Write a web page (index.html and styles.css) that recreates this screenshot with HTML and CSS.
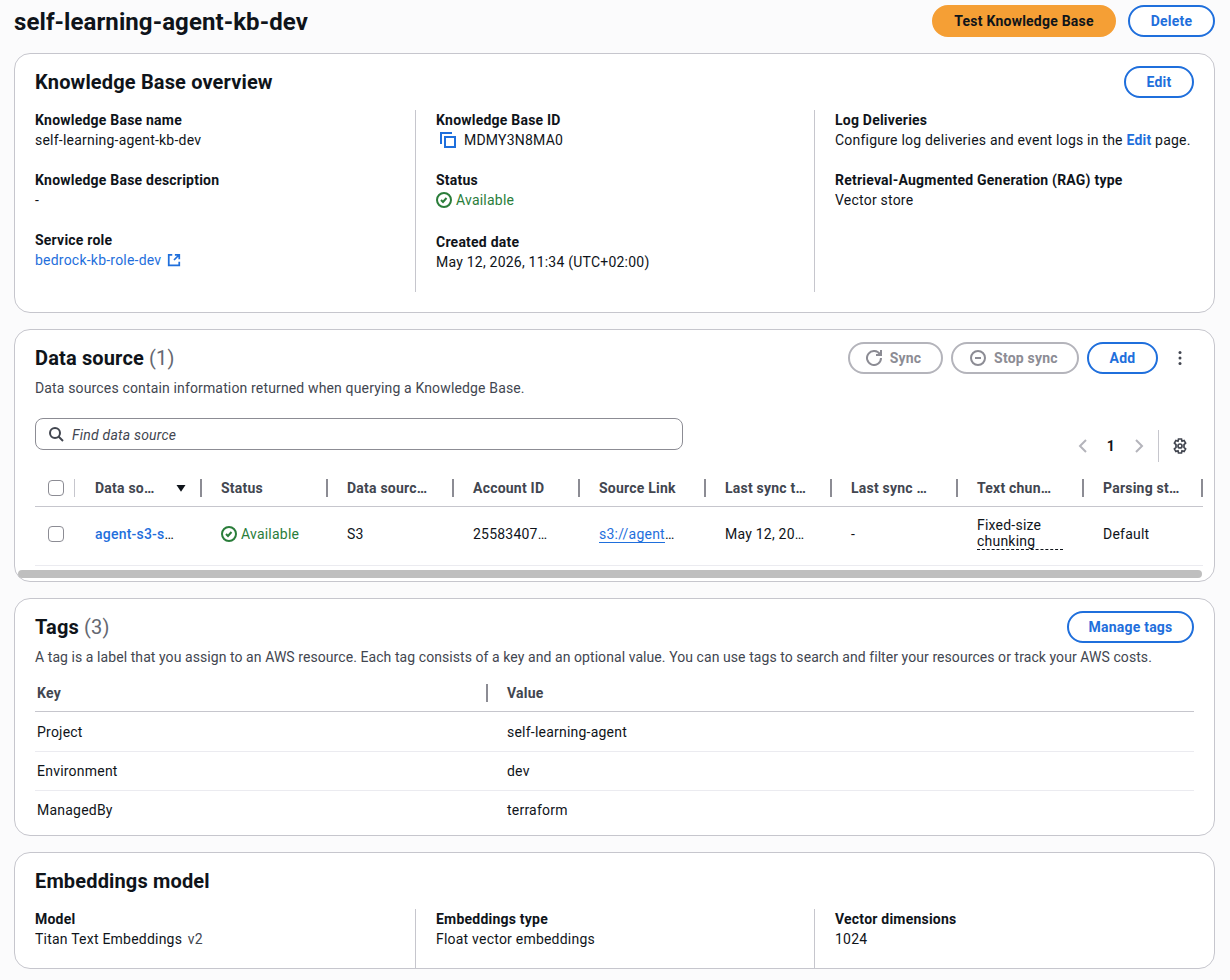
FILE: index.html
```html
<!DOCTYPE html>
<html lang="en">
<head>
    <meta charset="UTF-8">
    <title>self-learning-agent-kb-dev</title>
    <link rel="stylesheet" href="styles.css">
</head>
<body>
    <div class="page">
        <!-- page header -->
        <div class="page-header">
            <h1>self-learning-agent-kb-dev</h1>
            <div class="actions">
                <button class="btn btn-primary">Test Knowledge Base</button>
                <button class="btn btn-delete">Delete</button>
            </div>
        </div>

        <!-- overview -->
        <section class="card card-overview">
            <div class="card-header">
                <h2>Knowledge Base overview</h2>
                <button class="btn btn-edit">Edit</button>
            </div>
            <div class="columns">
                <div class="col">
                    <div class="field"><div class="label">Knowledge Base name</div><div>self-learning-agent-kb-dev</div></div>
                    <div class="field"><div class="label">Knowledge Base description</div><div>-</div></div>
                    <div class="field">
                        <div class="label">Service role</div>
                        <a class="link" href="#">bedrock-kb-role-dev<svg class="icon icon-ext" viewBox="0 0 16 16"><path d="M14 7V2H9M14 2 8 8M6 2H2v12h12v-4"/></svg></a>
                    </div>
                </div>
                <div class="col">
                    <div class="field">
                        <div class="label">Knowledge Base ID</div>
                        <div class="copy-row">
                            <svg class="icon icon-copy" viewBox="0 0 16 16"><path d="M1 12V1h11"/><path d="M5 5h10v10H5z"/></svg>
                            <span>MDMY3N8MA0</span>
                        </div>
                    </div>
                    <div class="field field-status">
                        <div class="label">Status</div>
                        <div class="status">
                            <svg class="icon" viewBox="0 0 16 16"><circle cx="8" cy="8" r="7"/><path d="m5 8 2 2 3.5-4"/></svg>
                            Available
                        </div>
                    </div>
                    <div class="field"><div class="label">Created date</div><div>May 12, 2026, 11:34 (UTC+02:00)</div></div>
                </div>
                <div class="col">
                    <div class="field">
                        <div class="label">Log Deliveries</div>
                        <div>Configure log deliveries and event logs in the <a class="link link-bold" href="#">Edit</a> page.</div>
                    </div>
                    <div class="field"><div class="label">Retrieval-Augmented Generation (RAG) type</div><div>Vector store</div></div>
                </div>
            </div>
        </section>

        <!-- data source -->
        <section class="card card-source">
            <div class="card-header">
                <h2>Data source <span class="count">(1)</span></h2>
                <div class="actions actions-tight">
                    <button class="btn btn-disabled btn-sync">
                        <svg class="icon" viewBox="0 0 16 16"><path d="M10 5h5V0"/><path d="M15 8a7 7 0 1 1-.98-3.57"/></svg>
                        Sync
                    </button>
                    <button class="btn btn-disabled btn-stop">
                        <svg class="icon" viewBox="0 0 16 16"><circle cx="8" cy="8" r="7"/><path d="M5 8h6"/></svg>
                        Stop sync
                    </button>
                    <button class="btn btn-add">Add</button>
                    <svg class="icon icon-more" viewBox="0 0 16 16"><circle cx="8" cy="2.5" r="1.5"/><circle cx="8" cy="8" r="1.5"/><circle cx="8" cy="13.5" r="1.5"/></svg>
                </div>
            </div>
            <p class="desc">Data sources contain information returned when querying a Knowledge Base.</p>
            <div class="filter-row">
                <div class="search">
                    <svg class="icon" viewBox="0 0 16 16"><circle cx="7" cy="7" r="5"/><path d="m15 15-4.5-4.5"/></svg>
                    <span>Find data source</span>
                </div>
                <div class="pager">
                    <svg class="icon icon-off" viewBox="0 0 16 16"><path d="m11 2-6 6 6 6"/></svg>
                    <span class="page-no">1</span>
                    <svg class="icon icon-off" viewBox="0 0 16 16"><path d="m5 2 6 6-6 6"/></svg>
                    <span class="pager-sep"></span>
                    <svg class="icon icon-gear" viewBox="0 0 16 16"><path d="M6.5 1h3l.5 2.2 2.1-.7 1.5 2.6L12 6.6v2.8l1.6 1.5-1.5 2.6-2.1-.7-.5 2.2h-3l-.5-2.2-2.1.7-1.5-2.6L4 9.4V6.6L2.4 5.1l1.5-2.6 2.1.7z"/><circle cx="8" cy="8" r="2"/></svg>
                </div>
            </div>
            <table class="source-table">
                <thead>
                    <tr>
                        <th class="cell-check"><span class="checkbox"></span></th>
                        <th class="cell-sorted"><span>Data so…</span><svg class="caret" viewBox="0 0 16 16"><path d="M2 4h12l-6 9z"/></svg></th>
                        <th>Status</th>
                        <th>Data sourc…</th>
                        <th>Account ID</th>
                        <th>Source Link</th>
                        <th>Last sync t…</th>
                        <th>Last sync …</th>
                        <th>Text chun…</th>
                        <th class="cell-last">Parsing st…</th>
                    </tr>
                </thead>
                <tbody>
                    <tr>
                        <td class="cell-check"><span class="checkbox"></span></td>
                        <td><a class="link link-name" href="#">agent-s3-s</a>…</td>
                        <td>
                            <div class="status">
                                <svg class="icon" viewBox="0 0 16 16"><circle cx="8" cy="8" r="7"/><path d="m5 8 2 2 3.5-4"/></svg>
                                Available
                            </div>
                        </td>
                        <td>S3</td>
                        <td>25583407…</td>
                        <td><a class="link link-under" href="#">s3://agent</a>…</td>
                        <td>May 12, 20…</td>
                        <td>-</td>
                        <td><span class="dotted">Fixed-size chunking</span></td>
                        <td>Default</td>
                    </tr>
                </tbody>
            </table>
            <div class="scrollbar"></div>
        </section>

        <!-- tags -->
        <section class="card card-tags">
            <div class="card-header">
                <h2>Tags <span class="count">(3)</span></h2>
                <button class="btn btn-manage">Manage tags</button>
            </div>
            <p class="desc desc-tags">A tag is a label that you assign to an AWS resource. Each tag consists of a key and an optional value. You can use tags to search and filter your resources or track your AWS costs.</p>
            <table class="tags-table">
                <thead>
                    <tr><th>Key</th><th>Value</th></tr>
                </thead>
                <tbody>
                    <tr><td>Project</td><td>self-learning-agent</td></tr>
                    <tr><td>Environment</td><td>dev</td></tr>
                    <tr><td>ManagedBy</td><td>terraform</td></tr>
                </tbody>
            </table>
        </section>

        <!-- embeddings -->
        <section class="card card-model">
            <h2>Embeddings model</h2>
            <div class="columns columns-model">
                <div class="col">
                    <div class="field"><div class="label">Model</div><div>Titan Text Embeddings <span class="version">v2</span></div></div>
                </div>
                <div class="col">
                    <div class="field"><div class="label">Embeddings type</div><div>Float vector embeddings</div></div>
                </div>
                <div class="col">
                    <div class="field"><div class="label">Vector dimensions</div><div>1024</div></div>
                </div>
            </div>
        </section>
    </div>
</body>
</html>
```

FILE: styles.css
```css
body {
    margin: 0;
    background-color: #fbfbfc;
    color: #0f141a;
    font-family: Roboto, "Open Sans", sans-serif;
    font-size: 14px;
    line-height: 20px;
    letter-spacing: 0.22px;
}

h1, h2, p {
    margin: 0;
}

.page {
    padding: 5px 15px 0 14px;
}

/* header */
.page-header {
    display: flex;
    justify-content: space-between;
    align-items: center;
    height: 32px;
    margin-bottom: 16px;
}

h1 {
    padding-top: 2px;
    font-size: 24px;
    line-height: 32px;
    font-weight: 700;
    letter-spacing: 0.08px;
}

h2 {
    font-size: 20px;
    line-height: 24px;
    font-weight: 700;
    letter-spacing: 0.15px;
}

.count {
    font-weight: 400;
    color: #656871;
}

.actions {
    display: flex;
    align-items: center;
    gap: 12px;
}

.actions-tight {
    gap: 8px;
}

/* buttons */
.btn {
    display: inline-flex;
    align-items: center;
    justify-content: center;
    gap: 8px;
    box-sizing: border-box;
    height: 32px;
    padding: 0;
    border: 2px solid #1f6fdc;
    border-radius: 20px;
    background-color: #fff;
    color: #1f6fdc;
    font-family: inherit;
    font-size: 14px;
    font-weight: 700;
    letter-spacing: 0.22px;
    white-space: nowrap;
}

.btn-primary {
    width: 184px;
    border-color: #f59f35;
    background-color: #f59f35;
    color: #0f141a;
}

.btn-delete {
    width: 87px;
}

.btn-edit {
    width: 70px;
}

.btn-disabled {
    border-color: #b4b4bb;
    color: #8c8c94;
}

.btn-sync {
    width: 95px;
    padding-right: 4px;
}

.btn-stop {
    width: 128px;
    padding-right: 2px;
}

.btn-add {
    width: 71px;
}

.btn-manage {
    width: 127px;
}

/* cards */
.card {
    box-sizing: border-box;
    margin-bottom: 16px;
    border: 1px solid #c6c6cd;
    border-radius: 16px;
    background-color: #fff;
    padding: 12px 20px 0;
}

.card-overview {
    height: 260px;
}

.card-source {
    height: 253px;
    padding-right: 11px;
}

.card-tags {
    height: 238px;
}

.card-model {
    height: 117px;
    padding-top: 16px;
}

.card-header {
    display: flex;
    justify-content: space-between;
    align-items: center;
}

.card-source .card-header {
    padding-right: 9px;
}

.columns {
    display: grid;
    grid-template-columns: 380px 399px 1fr;
    height: 182px;
    margin-top: 12px;
}

.columns-model {
    height: 40px;
    margin-top: 16px;
}

.col + .col {
    border-left: 1px solid #c6c6cd;
    padding-left: 20px;
}

.field {
    margin-bottom: 20px;
}

.field-status {
    margin-bottom: 22px;
}

.label {
    font-weight: 700;
}

.link {
    color: #1f6fdc;
    text-decoration: none;
}

.link-bold {
    font-weight: 700;
}

.link-name {
    font-weight: 500;
}

.link-under {
    border-bottom: 1px solid #1f6fdc;
}

.version {
    margin-left: 2px;
    color: #424650;
}

/* icons */
.icon {
    width: 16px;
    height: 16px;
    fill: none;
    stroke: currentColor;
    stroke-width: 2;
    flex: none;
}

.icon-ext {
    width: 14px;
    height: 14px;
    margin-left: 6px;
    vertical-align: -2px;
}

.copy-row {
    display: flex;
    align-items: center;
    gap: 8px;
    padding-left: 4px;
}

.icon-copy {
    color: #1f6fdc;
}

.status {
    display: flex;
    align-items: center;
    gap: 4px;
    color: #2a7d3a;
}

.icon-more {
    margin-left: 6px;
    margin-right: 6px;
    fill: #424650;
    stroke: none;
}

.icon-off {
    color: #b4b4bb;
}

.icon-gear {
    color: #424650;
    stroke-width: 1.7;
}

/* data source table */
.desc {
    margin-top: 4px;
    color: #424650;
    letter-spacing: 0.15px;
}

.desc-tags {
    letter-spacing: 0.07px;
}

.filter-row {
    display: flex;
    justify-content: space-between;
    height: 44px;
    margin-top: 20px;
}

.search {
    display: flex;
    align-items: center;
    gap: 8px;
    box-sizing: border-box;
    width: 648px;
    height: 32px;
    padding-left: 12px;
    border: 1px solid #8c8c94;
    border-radius: 8px;
    color: #424650;
    font-style: italic;
}

.search span {
    padding-top: 1px;
}

.pager {
    display: flex;
    align-items: center;
    align-self: flex-end;
    height: 32px;
    gap: 12px;
    padding-right: 15px;
}

.page-no {
    width: 16px;
    text-align: center;
    font-weight: 700;
}

.pager-sep {
    height: 32px;
    border-left: 1px solid #c6c6cd;
    margin: 0 1px 0 -1px;
}

table {
    border-collapse: collapse;
    table-layout: fixed;
    width: 100%;
}

th {
    position: relative;
    box-sizing: border-box;
    text-align: left;
    font-weight: 700;
    color: #424650;
    border-bottom: 1px solid #c6c6cd;
}

.source-table {
    margin-top: 8px;
    width: 1168px;
}

.source-table th {
    width: 126px;
    height: 36px;
    padding: 0 0 0 21px;
}

/* column resizer */
th::before {
    content: "";
    position: absolute;
    top: 9px;
    left: 0;
    height: 18px;
    border-left: 2px solid #8c8c94;
}

.source-table th:first-child::before {
    display: none;
}

.source-table .cell-check {
    width: 39px;
    padding: 0 0 0 13px;
    box-sizing: border-box;
}

.source-table th.cell-sorted::before {
    border-left: 1px solid #c6c6cd;
}

.source-table th.cell-last {
    width: 121px;
}

.source-table th.cell-last::after {
    content: "";
    position: absolute;
    top: 9px;
    right: 0;
    height: 18px;
    border-left: 2px solid #8c8c94;
}

.source-table td {
    height: 59px;
    padding: 0 0 4px 21px;
    box-sizing: border-box;
    border-bottom: 1px solid #ebebf0;
}

.source-table td.cell-check {
    padding: 0 0 4px 13px;
}

.cell-sorted span {
    display: inline-block;
    width: 80px;
}

.caret {
    width: 12px;
    height: 12px;
    fill: #0f141a;
    vertical-align: -1px;
}

.checkbox {
    display: block;
    box-sizing: border-box;
    width: 16px;
    height: 16px;
    border: 1px solid #8c8c94;
    border-radius: 4px;
    background-color: #fff;
}

.dotted {
    display: inline-block;
    box-sizing: border-box;
    width: 86px;
    line-height: 16px;
    border-bottom: 1px dashed #0f141a;
}

.scrollbar {
    height: 8px;
    margin: 4px 0 0 -17px;
    width: 1184px;
    border-radius: 4px;
    background-color: #bfbfbf;
}

/* tags */
.tags-table {
    margin-top: 8px;
}

.tags-table th {
    height: 36px;
    padding: 0 0 0 2px;
}

.tags-table th:first-child::before {
    display: none;
}

.tags-table th:first-child {
    width: 451px;
}

.tags-table th + th {
    padding-left: 21px;
}

.tags-table td {
    height: 39px;
    padding: 1px 0 0 2px;
    box-sizing: border-box;
    border-bottom: 1px solid #ebebf0;
}

.tags-table tbody tr:first-child td {
    height: 40px;
}

.tags-table td + td {
    padding-left: 21px;
}

.tags-table tr:last-child td {
    border-bottom: none;
}
```
